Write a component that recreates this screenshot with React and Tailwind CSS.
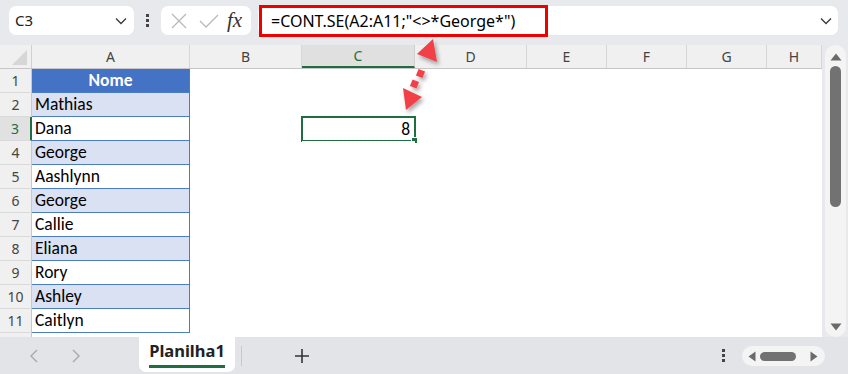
import React from "react";

const UI = { fontFamily: '"Segoe UI", "Noto Sans", "Open Sans", sans-serif' };
const CELL = { fontFamily: 'Carlito, Calibri, Lato, "Noto Sans", sans-serif' };
const FORMULA = { fontFamily: '"Segoe UI", "Noto Sans", sans-serif' };

const cols = [
  { l: "A", w: "w-[158px]" },
  { l: "B", w: "w-[112px]" },
  { l: "C", w: "w-[113px]", sel: true },
  { l: "D", w: "w-[112px]" },
  { l: "E", w: "w-[80px]" },
  { l: "F", w: "w-[80px]" },
  { l: "G", w: "w-[80px]" },
  { l: "H", w: "flex-1" },
];

const names = ["Mathias", "Dana", "George", "Aashlynn", "George", "Callie", "Eliana", "Rory", "Ashley", "Caitlyn"];

function ChevronDown({ className }) {
  return (
    <svg className={className} width="12" height="8" viewBox="0 0 12 8" fill="none">
      <path d="M1 1.5 L6 6.5 L11 1.5" stroke="#3a3a3a" strokeWidth="1.3" />
    </svg>
  );
}

function Row({ n, name }) {
  const isHeader = n === 1;
  const sel = n === 3;
  const banded = !isHeader && n % 2 === 0;
  return (
    <div className="flex h-[24px]">
      <div
        className={`w-[32px] h-full flex items-center justify-center text-[14px] border-b border-[#dadada] ${
          sel ? "bg-[#e1e1e1] text-[#1e6e42] border-r-2 border-r-[#1e6e42]" : "bg-[#f0f0f0] text-[#444] border-r border-r-[#c8c8c8]"
        }`}
        style={UI}
      >
        {n}
      </div>
      <div
        className={`w-[158px] h-full flex items-center border-r border-b border-[#4a7cc0] ${
          isHeader ? "bg-[#4472c4] justify-center text-white font-bold" : banded ? "bg-[#d9e1f2] pl-[3px] text-black" : "bg-white pl-[3px] text-black"
        } text-[17.5px]`}
        style={CELL}
      >
        {isHeader ? "Nome" : name}
      </div>
      <div className="w-[112px] h-full bg-white" />
      <div className="w-[113px] h-full bg-white relative">
        {sel && (
          <div className="absolute left-[-1px] top-[-1px] w-[115px] h-[26px] border-2 border-[#1e6e42] flex items-center justify-end pr-[4px] text-[17.5px] text-black" style={CELL}>
            8
            <div className="absolute right-[-4px] bottom-[-4px] w-[5px] h-[5px] bg-[#1e6e42] border border-white box-content" />
          </div>
        )}
      </div>
      <div className="flex-1 h-full bg-white" />
    </div>
  );
}

export default function App() {
  return (
    <div className="w-[848px] h-[374px] relative overflow-hidden bg-[#e8e9ed]" style={UI}>
      {/* top bar */}
      <div className="h-[45px] flex items-start pt-[6px] pl-[9px] pr-[10px]">
        <div className="w-[125px] h-[29px] bg-white rounded-[7px] flex items-center justify-between pl-[6px] pr-[7px] text-[15px] text-[#222]">
          <span>C3</span>
          <ChevronDown />
        </div>
        <div className="w-[27px] h-[29px] flex flex-col items-center justify-center gap-[2px]">
          <div className="w-[3px] h-[3px] bg-[#444]" />
          <div className="w-[3px] h-[3px] bg-[#444]" />
          <div className="w-[3px] h-[3px] bg-[#444]" />
        </div>
        <div className="w-[90px] h-[29px] bg-white rounded-[7px] flex items-center pl-[9px] pr-[6px]">
          <svg width="18" height="18" viewBox="0 0 18 18" fill="none">
            <path d="M2 2 L16 16 M16 2 L2 16" stroke="#b9b9b9" strokeWidth="1.3" />
          </svg>
          <svg className="ml-[11px]" width="20" height="16" viewBox="0 0 20 16" fill="none">
            <path d="M1 8 L7 14 L19 2" stroke="#b9b9b9" strokeWidth="1.3" />
          </svg>
          <span className="ml-[8px] text-[21px] italic text-[#333] leading-none" style={{ fontFamily: '"Liberation Serif", serif' }}>
            fx
          </span>
        </div>
        <div className="flex-1 ml-[7px] h-[29px] bg-white rounded-[7px] flex items-center justify-between pl-[13px] pr-[6px]">
          <span className="text-[16px] text-black" style={FORMULA}>
            =CONT.SE(A2:A11;"&lt;&gt;*George*")
          </span>
          <ChevronDown />
        </div>
      </div>

      {/* grid + vertical scroll */}
      <div className="flex h-[292px]">
        <div className="w-[822px] h-full bg-white overflow-hidden">
          {/* column header */}
          <div className="flex h-[24px] bg-[#f0f0f0] border-b border-[#c6c6c6]">
            <div className="w-[32px] h-full border-r border-[#d0d0d0] relative">
              <svg className="absolute right-[4px] bottom-[3px]" width="15" height="15" viewBox="0 0 15 15">
                <path d="M15 0 L15 15 L0 15 Z" fill="#d6d6d6" />
              </svg>
            </div>
            {cols.map((c) => (
              <div
                key={c.l}
                className={`${c.w} h-full flex items-center justify-center text-[14px] ${
                  c.sel ? "bg-[#e0e0e0] text-[#1e6e42] border-b-2 border-[#1e6e42] border-r border-r-[#d0d0d0]" : "text-[#444] border-r border-[#d6d6d6]"
                }`}
              >
                {c.l}
              </div>
            ))}
          </div>
          <Row n={1} />
          {names.map((nm, i) => (
            <Row key={i} n={i + 2} name={nm} />
          ))}
          <div className="flex h-[6px]">
            <div className="w-[32px] h-full bg-[#f0f0f0] border-r border-[#c8c8c8]" />
          </div>
        </div>
        <div className="ml-[3px] w-[21px] h-full rounded-full bg-[#f4f4f4] flex flex-col items-center pt-[8px] pb-[6px]">
          <svg width="12" height="8" viewBox="0 0 12 8">
            <path d="M6 0.5 L11.5 7.5 L0.5 7.5 Z" fill="#6b6b6b" />
          </svg>
          <div className="mt-[5px] w-[11px] h-[141px] rounded-full bg-[#727272]" />
          <div className="flex-1" />
          <svg width="12" height="8" viewBox="0 0 12 8">
            <path d="M6 7.5 L11.5 0.5 L0.5 0.5 Z" fill="#6b6b6b" />
          </svg>
        </div>
      </div>

      {/* bottom bar */}
      <div className="h-[37px] flex items-start bg-[#e3e4e8]">
        <div className="w-[139px] h-full flex items-center pl-[29px]">
          <svg width="10" height="14" viewBox="0 0 10 14" fill="none">
            <path d="M8 1 L2 7 L8 13" stroke="#a9a9a9" strokeWidth="1.4" />
          </svg>
          <svg className="ml-[32px]" width="10" height="14" viewBox="0 0 10 14" fill="none">
            <path d="M2 1 L8 7 L2 13" stroke="#a9a9a9" strokeWidth="1.4" />
          </svg>
        </div>
        <div className="w-[96px] h-[35px] bg-white rounded-b-[7px] flex flex-col items-center justify-center">
          <span className="text-[16.5px] font-bold text-[#222] leading-[20px]">Planilha1</span>
          <div className="mt-[4px] w-[76px] h-[3px] bg-[#1e6e42]" />
        </div>
        <div className="ml-[6px] mt-[9px] w-px h-[20px] bg-[#c9c9c9]" />
        <div className="ml-[52px] h-full flex items-center">
          <svg width="16" height="16" viewBox="0 0 16 16">
            <path d="M8 1 V15 M1 8 H15" stroke="#333" strokeWidth="1.6" />
          </svg>
        </div>
        <div className="flex-1" />
        <div className="h-full flex flex-col items-center justify-center gap-[2px] mr-[17px]">
          <div className="w-[3px] h-[3px] bg-[#444]" />
          <div className="w-[3px] h-[3px] bg-[#444]" />
          <div className="w-[3px] h-[3px] bg-[#444]" />
        </div>
        <div className="mt-[9px] mr-[23px] w-[83px] h-[20px] rounded-full bg-[#f4f4f4] flex items-center pl-[6px] pr-[7px]">
          <svg width="8" height="11" viewBox="0 0 8 11">
            <path d="M0.5 5.5 L7.5 0.5 L7.5 10.5 Z" fill="#6b6b6b" />
          </svg>
          <div className="ml-[4px] w-[36px] h-[9px] rounded-full bg-[#727272]" />
          <div className="flex-1" />
          <svg width="8" height="11" viewBox="0 0 8 11">
            <path d="M7.5 5.5 L0.5 0.5 L0.5 10.5 Z" fill="#6b6b6b" />
          </svg>
        </div>
      </div>

      {/* annotation: red box */}
      <div className="absolute left-[259px] top-[5px] w-[289px] h-[32px] border-[3px] border-[#ee0000] pointer-events-none" />
      {/* annotation: arrow */}
      <svg className="absolute left-0 top-0 pointer-events-none" width="848" height="374" viewBox="0 0 848 374">
        <defs>
          <filter id="sh" x="-50%" y="-50%" width="200%" height="200%">
            <feDropShadow dx="2" dy="3" stdDeviation="2" floodColor="#000" floodOpacity="0.35" />
          </filter>
        </defs>
        <g filter="url(#sh)" fill="#f2404a">
          <polygon points="433,39 417,54 437,62" />
          <polygon points="406,110 403,88 422,97" />
          <rect x="-3.5" y="-3.5" width="7" height="7" transform="translate(420.5 73.5) rotate(22)" />
          <rect x="-3.5" y="-3.5" width="7" height="7" transform="translate(414.5 84) rotate(22)" />
        </g>
      </svg>
    </div>
  );
}
